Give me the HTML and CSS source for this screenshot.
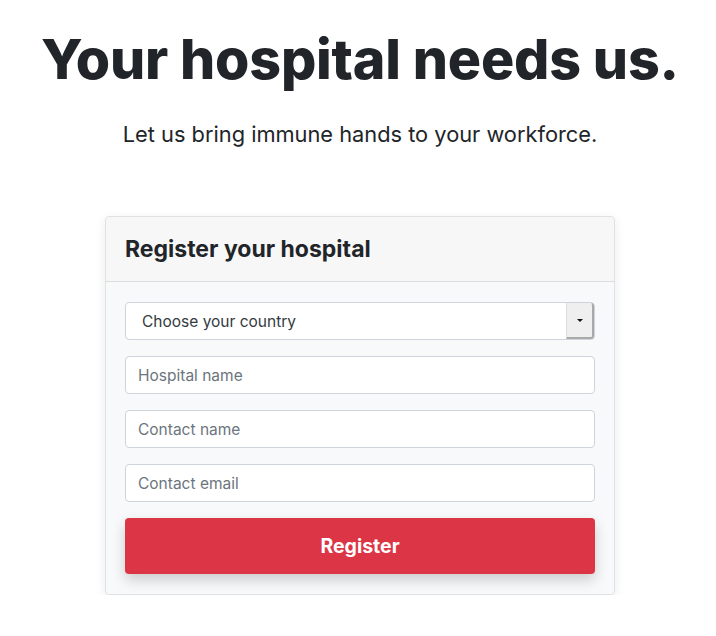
FILE: index.html
```html
<!DOCTYPE html>
<html lang="en">
<head>
    <meta charset="UTF-8">
    <meta name="viewport" content="width=device-width, initial-scale=1.0">
    <title>Your hospital needs us</title>
    <link rel="stylesheet" href="styles.css">
</head>
<body>
    <div class="hero">
        <h1>Your hospital needs us.</h1>
        <p class="lead">Let us bring immune hands to your workforce.</p>
    </div>

    <div class="card">
        <div class="card-header">Register your hospital</div>
        <div class="card-body">
            <div class="select">
                <span>Choose your country</span>
                <div class="select-btn"><span class="caret"></span></div>
            </div>
            <input type="text" class="field" placeholder="Hospital name">
            <input type="text" class="field" placeholder="Contact name">
            <input type="email" class="field" placeholder="Contact email">
            <button class="register">Register</button>
        </div>
    </div>
</body>
</html>
```

FILE: styles.css
```css
body {
    font-family: 'Inter', 'Noto Sans', sans-serif;
    background: #ffffff;
    color: #212529;
    margin: 0;
    padding: 0 0 0 4px;
}
.hero {
    text-align: center;
    padding-top: 26px;
}
h1 {
    font-size: 55.5px;
    font-weight: 800;
    letter-spacing: -0.2px;
    line-height: 66px;
    margin: 0;
}
.lead {
    font-size: 21.8px;
    margin: 27px 0 0;
    line-height: 30px;
}
.card {
    width: 508px;
    margin: 67px auto 0;
    border: 1px solid #dfe1e3;
    border-radius: 4px;
    background-color: #f8f9fa;
    box-shadow: 0 3px 12px rgba(0, 0, 0, 0.08);
}
.card-header {
    background-color: #f7f7f7;
    border-bottom: 1px solid #dcdcdc;
    padding: 0 19px;
    height: 64px;
    line-height: 64px;
    font-size: 23px;
    font-weight: 700;
    border-radius: 4px 4px 0 0;
}
.card-body {
    padding: 20px 19px;
    display: flex;
    flex-direction: column;
    gap: 16px;
}
.select {
    height: 38px;
    box-sizing: border-box;
    border: 1px solid #ced4da;
    border-radius: 4px;
    background: #ffffff;
    display: flex;
    align-items: center;
    justify-content: space-between;
    padding-left: 16px;
    font-size: 15.5px;
    color: #343a40;
}
.select-btn {
    width: 28px;
    height: 36px;
    box-sizing: border-box;
    background: #efefef;
    border-left: 1px solid #dcdcdc;
    border-right: 2px solid #a9a9a9;
    border-bottom: 2px solid #a9a9a9;
    border-radius: 0 3px 3px 0;
    display: flex;
    align-items: center;
    justify-content: center;
}
.caret {
    width: 0;
    height: 0;
    border-left: 3px solid transparent;
    border-right: 3px solid transparent;
    border-top: 3px solid #111;
}
.field {
    height: 38px;
    box-sizing: border-box;
    border: 1px solid #ced4da;
    border-radius: 4px;
    background: #ffffff;
    padding: 0 12px;
    font-family: inherit;
    font-size: 15.5px;
    color: #212529;
    margin: 0;
}
.field::placeholder {
    color: #6c757d;
}
.register {
    height: 56px;
    border: none;
    border-radius: 4px;
    background-color: #dc3545;
    color: #ffffff;
    font-family: inherit;
    font-size: 19.5px;
    font-weight: 700;
    box-shadow: 0 6px 14px rgba(0, 0, 0, 0.18);
    cursor: pointer;
}
```
